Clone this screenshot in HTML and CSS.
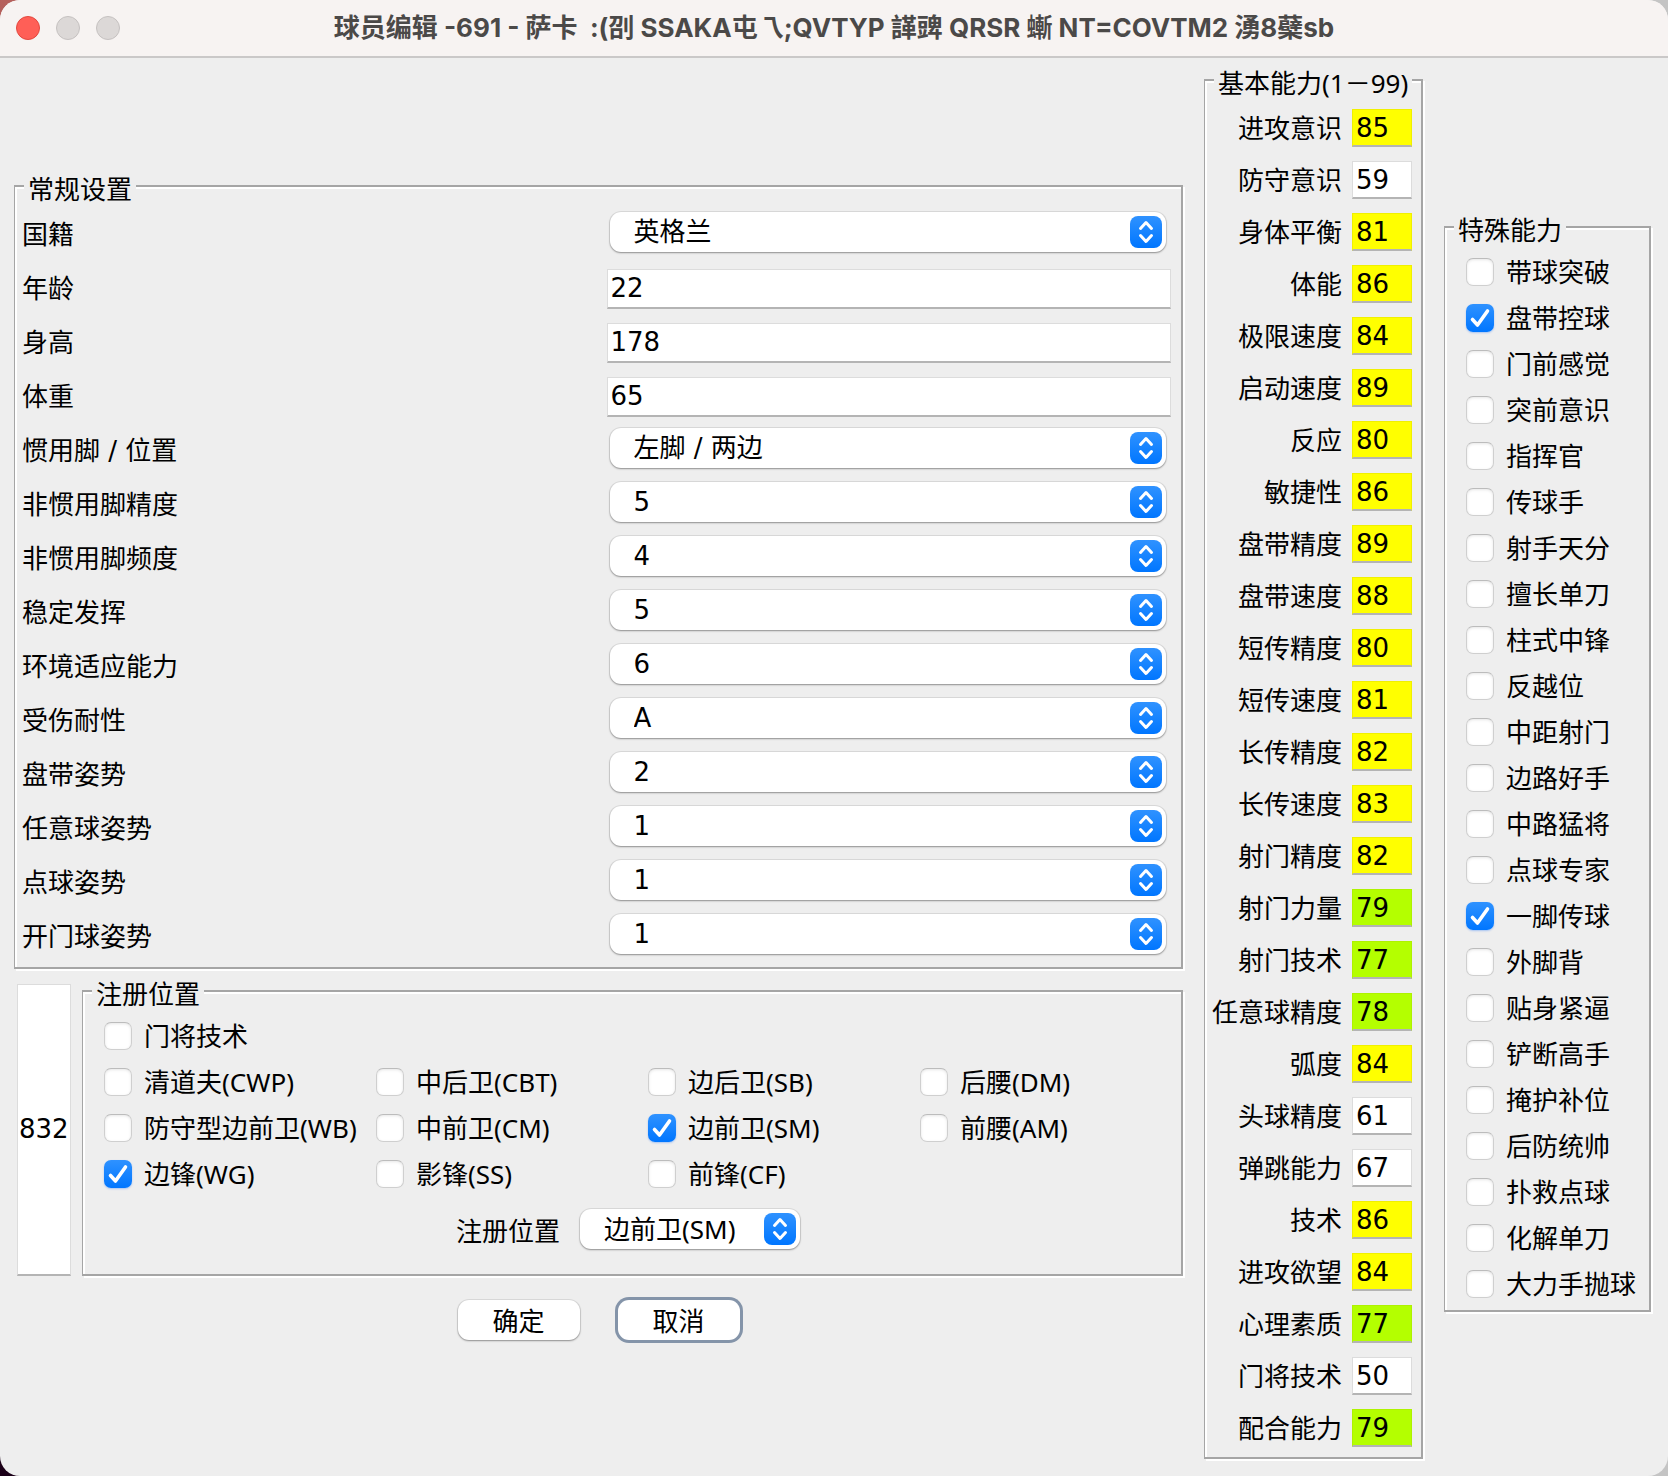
FILE: index.html
```
<!DOCTYPE html>
<html lang="zh-CN">
<head>
    <meta charset="UTF-8">
    <meta name="viewport" content="width=device-width, initial-scale=1.0">
    <title>球员编辑</title>
    <link rel="stylesheet" href="styles.css">
</head>
<body>
    <div class="window">
        <header class="titlebar">
            <div class="lights">
                <button class="light close" type="button" aria-label="关闭"></button>
                <button class="light" type="button" aria-label="最小化"></button>
                <button class="light" type="button" aria-label="缩放"></button>
            </div>
            <h1 class="title">球员编辑 -691 - 萨卡 &nbsp;:(刟 SSAKA屯乁;QVTYP 諽豍 QRSR 螹 NT=COVTM2 湧8蘗sb</h1>
        </header>

        <form class="content">
            <div class="main">
                <fieldset class="panel">
                    <legend>常规设置</legend>
                    <div class="general" id="general"></div>
                </fieldset>

                <div class="register">
                    <input class="field total" type="text" value="832" aria-label="总和">
                    <fieldset class="panel positions">
                        <legend>注册位置</legend>
                        <div class="position-grid" id="positions"></div>
                        <div class="position-select">
                            <label for="regpos">注册位置</label>
                            <select class="select" id="regpos">
                                <option>边前卫(SM)</option>
                            </select>
                        </div>
                    </fieldset>
                </div>

                <div class="actions">
                    <button class="btn" type="button">确定</button>
                    <button class="btn focused" type="button">取消</button>
                </div>
            </div>

            <fieldset class="panel abilities">
                <legend>基本能力(1－99)</legend>
                <div id="abilities"></div>
            </fieldset>

            <fieldset class="panel specials">
                <legend>特殊能力</legend>
                <div id="specials"></div>
            </fieldset>
        </form>
    </div>

    <script src="script.js"></script>
</body>
</html>
```

FILE: styles.css
```
* {
    box-sizing: border-box;
}

body {
    margin: 0;
    background: linear-gradient(90deg, transparent 50%, #c4c4c4 50%), linear-gradient(#b5605c, #1b0018);
    color: #000;
    font-family: 'Noto Sans', 'Noto Sans CJK SC', sans-serif;
    font-size: 26px;
    line-height: 30px;
}

.window {
    display: flex;
    flex-direction: column;
    min-height: 100vh;
    background: #eee;
    border-radius: 20px;
    overflow: hidden;
}

/* title bar */
.titlebar {
    display: flex;
    align-items: center;
    height: 58px;
    padding: 0 16px;
    background: #f7f3f2;
    border-bottom: 2px solid #cac8c8;
}

.lights {
    display: flex;
    gap: 16px;
    width: 104px;
}

.light {
    width: 24px;
    height: 24px;
    padding: 0;
    border: 1px solid #c5c1c0;
    border-radius: 50%;
    background: #dcd8d7;
}

.close {
    border-color: #e2483f;
    background: #ff5f57;
}

.title {
    flex: 1;
    margin: 0;
    padding-right: 104px;
    color: #4b4948;
    font-family: Inter, 'Noto Sans CJK SC', sans-serif;
    font-size: 26px;
    font-weight: 700;
    text-align: center;
    white-space: nowrap;
}

/* layout */
.content {
    display: flex;
    flex: 1;
    align-items: center;
    gap: 21px;
    padding: 2px 17px 15px 14px;
}

.main {
    flex: 1;
    min-width: 0;
}

/* etched group box */
.panel {
    min-width: 0;
    margin: 0;
    padding: 4px 4px 3px;
    border: 2px solid #a5a5a5;
    border-left-width: 1px;
    box-shadow: 2px 2px 0 #fff, inset 2px 2px 0 #fff;
}

.panel legend {
    margin-left: 5px;
    padding: 6px 4px 0;
    background: #eee;
    white-space: nowrap;
}

/* controls */
.field {
    width: 100%;
    height: 38px;
    padding: 0 3px;
    border: 1px solid #dcdcdc;
    border-bottom: 2px solid #b4b4b4;
    border-radius: 0;
    background: #fff;
    color: #000;
    font-family: 'DejaVu Sans', sans-serif;
    font-size: 26px;
}

.select {
    appearance: none;
    height: 40px;
    padding: 1px 64px 0 24px;
    border: 0;
    border-radius: 11px;
    background: #fff url("data:image/svg+xml,%3Csvg xmlns='http://www.w3.org/2000/svg' width='32' height='32'%3E%3Cdefs%3E%3ClinearGradient id='g' x2='0' y2='1'%3E%3Cstop stop-color='%232f92ff'/%3E%3Cstop offset='1' stop-color='%230076ff'/%3E%3C/linearGradient%3E%3C/defs%3E%3Crect width='32' height='32' rx='8' fill='url(%23g)'/%3E%3Cpath d='M10.5 12.5 16 6.5l5.5 6M10.5 19.5l5.5 6 5.5-6' fill='none' stroke='%23fff' stroke-width='3' stroke-linecap='round' stroke-linejoin='round'/%3E%3C/svg%3E") no-repeat right 4px center;
    box-shadow: 0 0 0 1px rgba(0, 0, 0, 0.08), 0 1px 2px rgba(0, 0, 0, 0.35);
    color: #000;
    font-family: 'Noto Sans', 'Noto Sans CJK SC', sans-serif;
    font-size: 26px;
}

.check {
    display: flex;
    align-items: center;
    gap: 12px;
    height: 46px;
    white-space: nowrap;
}

.check input {
    appearance: none;
    flex: none;
    width: 28px;
    height: 28px;
    margin: 0;
    border: 1px solid #cfcfcf;
    border-top-color: #bcbcbc;
    border-radius: 7px;
    background: #fff;
    box-shadow: inset 0 1px 3px rgba(0, 0, 0, 0.1);
}

.check input:checked {
    border: 0;
    background: url("data:image/svg+xml,%3Csvg xmlns='http://www.w3.org/2000/svg' width='28' height='28'%3E%3Cpath d='M6.5 15.5 11.5 21 21.5 7' fill='none' stroke='%23fff' stroke-width='3.6' stroke-linecap='round' stroke-linejoin='round'/%3E%3C/svg%3E"), linear-gradient(#2f92ff, #0076ff);
    box-shadow: 0 1px 2px rgba(0, 100, 255, 0.3);
}

/* general settings */
.general {
    padding: 0 6px 0 3px;
}

.general-row {
    display: grid;
    grid-template-columns: 1fr 1fr;
    column-gap: 20px;
    align-items: center;
    height: 54px;
    font-family: 'DejaVu Sans', 'Noto Sans CJK SC', sans-serif;
}

.general-row .field {
    height: 40px;
}

.general-row .select {
    margin: 0 5px 6px 3px;
    font-family: inherit;
}

/* registered positions */
.register {
    display: flex;
    gap: 11px;
    margin-top: 4px;
    padding-left: 3px;
}

.total {
    width: 54px;
    height: auto;
    margin-top: 11px;
    padding: 0 1px;
}

.positions {
    flex: 1;
}

.position-grid {
    display: grid;
    grid-template-columns: repeat(4, 272px);
    padding-left: 17px;
}

.position-grid .check:first-child {
    grid-column: 1 / -1;
}

.position-select {
    display: flex;
    justify-content: center;
    align-items: center;
    gap: 20px;
    padding: 12px 8px 18px 0;
}

.position-select .select {
    margin-bottom: 4px;
}

.actions {
    display: flex;
    justify-content: center;
    gap: 38px;
    margin-top: 24px;
    padding-bottom: 14px;
}

.btn {
    width: 122px;
    height: 40px;
    padding: 0;
    border: 0;
    border-radius: 11px;
    background: #fff;
    box-shadow: 0 0 0 1px rgba(0, 0, 0, 0.08), 0 1px 2px rgba(0, 0, 0, 0.35);
    color: #000;
    font-family: 'Noto Sans CJK SC', sans-serif;
    font-size: 26px;
    line-height: 36px;
}

.focused {
    box-shadow: 0 0 0 3px #8494a9;
}

/* base abilities */
.abilities {
    width: 219px;
}

.ability {
    display: flex;
    justify-content: flex-end;
    align-items: center;
    gap: 10px;
    height: 52px;
    padding-right: 5px;
    white-space: nowrap;
}

.ability .field {
    flex: none;
    width: 60px;
}

.ability .high {
    border-color: #f0f000;
    border-bottom-color: #b4b4b4;
    background: #ff0;
}

.ability .good {
    border-color: #aef200;
    border-bottom-color: #b4b4b4;
    background: #b4ff00;
}

/* special abilities */
.specials {
    width: 207px;
}

.specials .check {
    padding-left: 17px;
}
```

FILE: script.js
```
const general = [
    ['国籍', '英格兰', 'select'],
    ['年龄', '22', 'text'],
    ['身高', '178', 'text'],
    ['体重', '65', 'text'],
    ['惯用脚 / 位置', '左脚 / 两边', 'select'],
    ['非惯用脚精度', '5', 'select'],
    ['非惯用脚频度', '4', 'select'],
    ['稳定发挥', '5', 'select'],
    ['环境适应能力', '6', 'select'],
    ['受伤耐性', 'A', 'select'],
    ['盘带姿势', '2', 'select'],
    ['任意球姿势', '1', 'select'],
    ['点球姿势', '1', 'select'],
    ['开门球姿势', '1', 'select']
];

const positions = [
    '门将技术',
    '清道夫(CWP)', '中后卫(CBT)', '边后卫(SB)', '后腰(DM)',
    '防守型边前卫(WB)', '中前卫(CM)', '边前卫(SM)', '前腰(AM)',
    '边锋(WG)', '影锋(SS)', '前锋(CF)'
];

const abilities = [
    ['进攻意识', 85], ['防守意识', 59], ['身体平衡', 81], ['体能', 86],
    ['极限速度', 84], ['启动速度', 89], ['反应', 80], ['敏捷性', 86],
    ['盘带精度', 89], ['盘带速度', 88], ['短传精度', 80], ['短传速度', 81],
    ['长传精度', 82], ['长传速度', 83], ['射门精度', 82], ['射门力量', 79],
    ['射门技术', 77], ['任意球精度', 78], ['弧度', 84], ['头球精度', 61],
    ['弹跳能力', 67], ['技术', 86], ['进攻欲望', 84], ['心理素质', 77],
    ['门将技术', 50], ['配合能力', 79]
];

const specials = [
    '带球突破', '盘带控球', '门前感觉', '突前意识', '指挥官', '传球手',
    '射手天分', '擅长单刀', '柱式中锋', '反越位', '中距射门', '边路好手',
    '中路猛将', '点球专家', '一脚传球', '外脚背', '贴身紧逼', '铲断高手',
    '掩护补位', '后防统帅', '扑救点球', '化解单刀', '大力手抛球'
];

const checked = ['边前卫(SM)', '边锋(WG)', '盘带控球', '一脚传球'];

function level(value) {
    if (value >= 80) return 'high';
    if (value >= 75) return 'good';
    return '';
}

function checkbox(name) {
    return `<label class="check"><input type="checkbox" ${checked.includes(name) ? 'checked' : ''}>${name}</label>`;
}

document.getElementById('general').innerHTML = general.map(([name, value, type], i) => {
    const control = type === 'select'
        ? `<select class="select" id="g${i}"><option>${value}</option></select>`
        : `<input class="field" type="text" id="g${i}" value="${value}">`;
    return `<div class="general-row"><label for="g${i}">${name}</label>${control}</div>`;
}).join('');

document.getElementById('abilities').innerHTML = abilities.map(([name, value], i) =>
    `<div class="ability"><label for="a${i}">${name}</label><input class="field ${level(value)}" type="text" id="a${i}" value="${value}"></div>`
).join('');

document.getElementById('positions').innerHTML = positions.map(checkbox).join('');
document.getElementById('specials').innerHTML = specials.map(checkbox).join('');
```
